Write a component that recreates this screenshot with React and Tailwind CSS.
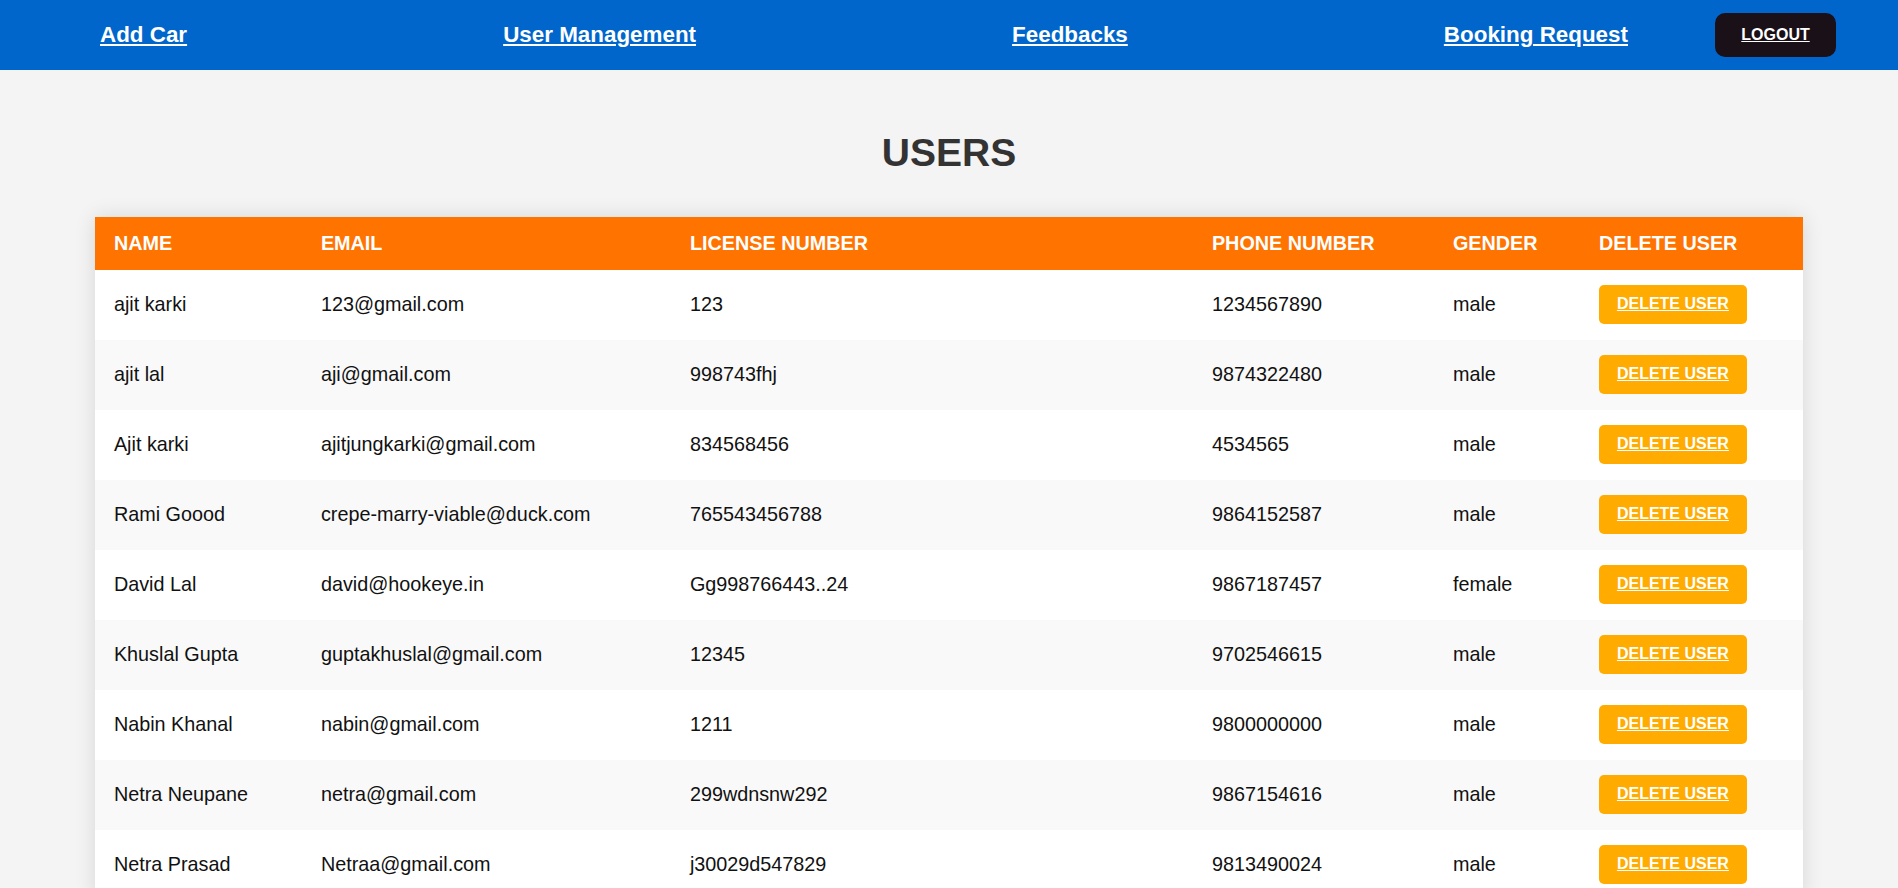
import React from "react";

const users = [
  ["ajit karki", "123@gmail.com", "123", "1234567890", "male"],
  ["ajit lal", "aji@gmail.com", "998743fhj", "9874322480", "male"],
  ["Ajit karki", "ajitjungkarki@gmail.com", "834568456", "4534565", "male"],
  ["Rami Goood", "crepe-marry-viable@duck.com", "765543456788", "9864152587", "male"],
  ["David Lal", "david@hookeye.in", "Gg998766443..24", "9867187457", "female"],
  ["Khuslal Gupta", "guptakhuslal@gmail.com", "12345", "9702546615", "male"],
  ["Nabin Khanal", "nabin@gmail.com", "1211", "9800000000", "male"],
  ["Netra Neupane", "netra@gmail.com", "299wdnsnw292", "9867154616", "male"],
  ["Netra Prasad", "Netraa@gmail.com", "j30029d547829", "9813490024", "male"],
];

const headers = ["Name", "Email", "License Number", "Phone Number", "Gender", "Delete User"];

export default function App() {
  return (
    <div className="min-h-screen bg-[#f4f4f4] font-['Liberation_Sans',Arial,sans-serif]">
      <nav className="h-[70px] bg-[#0066cc] flex items-center pl-[100px] pr-[62px]">
        <div className="flex-1 flex items-center justify-between">
          {["Add Car", "User Management", "Feedbacks", "Booking Request"].map((t) => (
            <a key={t} href="#" className="text-white font-bold text-[22.4px] underline">
              {t}
            </a>
          ))}
        </div>
        <button className="ml-[87px] w-[121px] h-[44px] rounded-[10px] bg-[#1a1018] text-white font-bold text-[16px] underline">
          LOGOUT
        </button>
      </nav>

      <h2 className="mt-[61px] mb-[41px] text-center text-[39px] font-bold text-[#333333] leading-[1.15]">
        USERS
      </h2>

      <div className="w-[90%] mx-auto bg-white shadow-[0_0_20px_rgba(0,0,0,0.12)]">
        <table className="w-full table-fixed border-collapse">
          <colgroup>
            <col className="w-[207px]" />
            <col className="w-[369px]" />
            <col className="w-[522px]" />
            <col className="w-[241px]" />
            <col className="w-[146px]" />
            <col />
          </colgroup>
          <thead>
            <tr className="bg-[#ff7300]">
              {headers.map((h) => (
                <th
                  key={h}
                  className="text-left uppercase text-white font-bold text-[19.8px] py-[15px] px-[19px] leading-[1.15]"
                >
                  {h}
                </th>
              ))}
            </tr>
          </thead>
          <tbody>
            {users.map((u, i) => (
              <tr key={i} className={i % 2 === 1 ? "bg-[#f9f9f9] h-[70px]" : "bg-white h-[70px]"}>
                {u.map((c, j) => (
                  <td key={j} className="px-[19px] py-0 text-[19.8px] text-[#111111] align-middle whitespace-nowrap">
                    {c}
                  </td>
                ))}
                <td className="px-[19px] py-0 align-middle">
                  <button className="bg-[#ffab00] text-white font-bold text-[16px] underline px-[18px] py-[10.5px] rounded-[5px] leading-[1.15]">
                    DELETE USER
                  </button>
                </td>
              </tr>
            ))}
          </tbody>
        </table>
      </div>
    </div>
  );
}
